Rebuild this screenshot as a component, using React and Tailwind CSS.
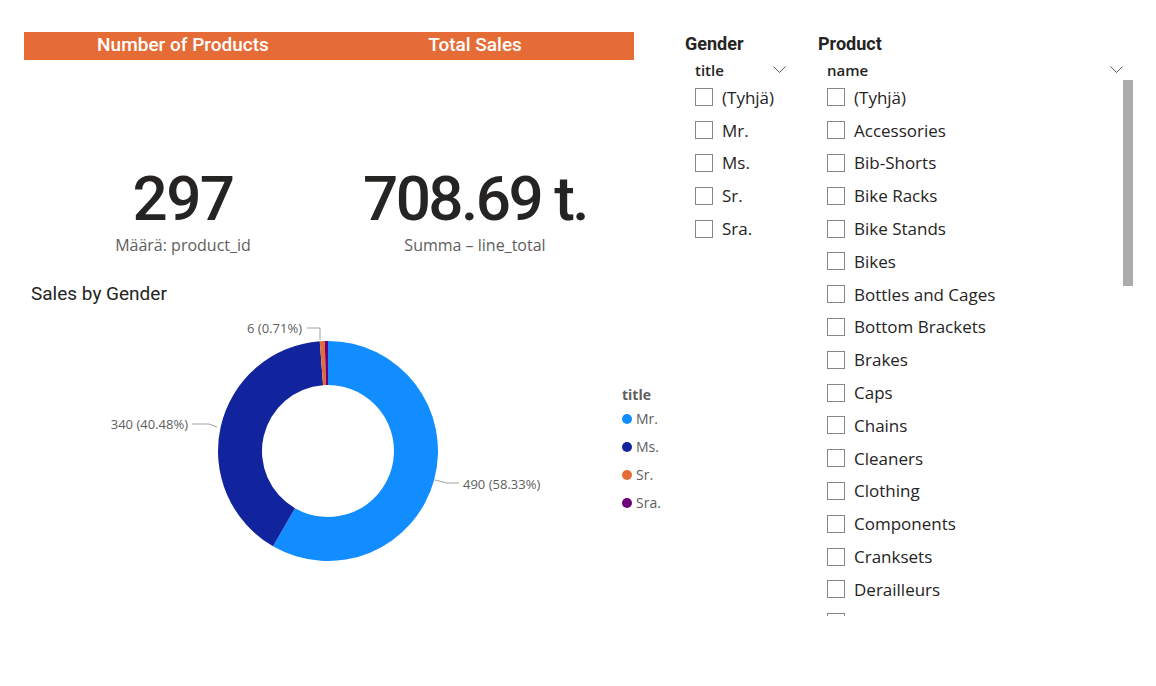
const genders = ["(Tyhjä)", "Mr.", "Ms.", "Sr.", "Sra."];

const products = [
  "(Tyhjä)",
  "Accessories",
  "Bib-Shorts",
  "Bike Racks",
  "Bike Stands",
  "Bikes",
  "Bottles and Cages",
  "Bottom Brackets",
  "Brakes",
  "Caps",
  "Chains",
  "Cleaners",
  "Clothing",
  "Components",
  "Cranksets",
  "Derailleurs",
  "Fenders",
];

const slices = [
  { name: "Mr.", value: 490, color: "#118DFF" },
  { name: "Ms.", value: 340, color: "#12239E" },
  { name: "Sr.", value: 6, color: "#E66C37" },
  { name: "Sra.", value: 4, color: "#6B007B" },
];

const CX = 304;
const CY = 145;
const R = 110;
const r = 66;

function point(angle, radius) {
  const rad = (angle * Math.PI) / 180;
  return [CX + radius * Math.sin(rad), CY - radius * Math.cos(rad)];
}

function arcPath(a0, a1) {
  const large = a1 - a0 > 180 ? 1 : 0;
  const [x0, y0] = point(a0, R);
  const [x1, y1] = point(a1, R);
  const [x2, y2] = point(a1, r);
  const [x3, y3] = point(a0, r);
  return `M${x0} ${y0} A${R} ${R} 0 ${large} 1 ${x1} ${y1} L${x2} ${y2} A${r} ${r} 0 ${large} 0 ${x3} ${y3} Z`;
}

function Chevron() {
  return (
    <svg width="13" height="8" viewBox="0 0 13 8">
      <polyline points="0.5,0.5 6.5,6.5 12.5,0.5" fill="none" stroke="#605E5C" strokeWidth="1" />
    </svg>
  );
}

function CheckRow({ label }) {
  return (
    <div className="h-[32.8px] flex items-center shrink-0">
      <div className="w-[18px] h-[18px] border border-[#8A8886] bg-white shrink-0" />
      <span className="ml-[9px] text-[17px] text-[#252423] whitespace-nowrap leading-none">{label}</span>
    </div>
  );
}

function Donut() {
  const total = slices.reduce((s, d) => s + d.value, 0);
  let start = 0;
  const paths = slices.map((d) => {
    const end = start + (d.value / total) * 360;
    const p = <path key={d.name} d={arcPath(start, end)} fill={d.color} />;
    start = end;
    return p;
  });

  return (
    <svg width="598" height="300" viewBox="0 0 598 300" className="shrink-0">
      {paths}
      <g fill="none" stroke="#A19F9D" strokeWidth="1">
        <polyline points="411,174 423,177 435,177" />
        <polyline points="168,118 185,118 193,121" />
        <polyline points="283,22 296,22 296,34" />
      </g>
      <g fill="#605E5C" fontSize="13" fontFamily="'Open Sans', sans-serif">
        <text x="439" y="178" dominantBaseline="central">490 (58.33%)</text>
        <text x="164" y="118" dominantBaseline="central" textAnchor="end">340 (40.48%)</text>
        <text x="278" y="22" dominantBaseline="central" textAnchor="end">6 (0.71%)</text>
      </g>
    </svg>
  );
}

export default function App() {
  return (
    <div className="w-[1156px] h-[686px] bg-white flex overflow-hidden font-['Open_Sans',sans-serif]">
      {/* report canvas */}
      <div className="ml-[24px] w-[610px] pt-[32px] flex flex-col shrink-0">
        <div className="h-[28px] pb-[3px] bg-[#E66C37] flex items-center text-white font-['Roboto',sans-serif] font-medium text-[19px] leading-[24px]">
          <div className="w-[318px] text-center">Number of Products</div>
          <div className="w-[266px] text-center">Total Sales</div>
        </div>

        <div className="mt-[108px] flex">
          <div className="w-[318px] flex flex-col items-center">
            <div className="font-['Roboto',sans-serif] font-medium text-[62px] tracking-[-1.5px] leading-none text-[#252423]">297</div>
            <div className="mt-[5px] text-[16px] leading-[20px] text-[#605E5C]">Määrä: product_id</div>
          </div>
          <div className="w-[266px] flex flex-col items-center">
            <div className="font-['Roboto',sans-serif] font-medium text-[62px] tracking-[-2.5px] leading-none text-[#252423] whitespace-nowrap">708.69 t.</div>
            <div className="mt-[5px] text-[16px] leading-[20px] text-[#605E5C]">Summa – line_total</div>
          </div>
        </div>

        <div className="mt-[27px] ml-[7px] font-['Roboto',sans-serif] text-[19px] leading-[24px] text-[#252423]">
          Sales by Gender
        </div>

        <div className="flex">
          <Donut />
          <div className="mt-[79px] flex flex-col">
            <div className="text-[14px] font-bold leading-[20px] text-[#605E5C]">title</div>
            {slices.map((d) => (
              <div key={d.name} className="h-[28px] flex items-center">
                <span className="w-[10px] h-[10px] rounded-full shrink-0" style={{ backgroundColor: d.color }} />
                <span className="ml-[4px] text-[14px] leading-none text-[#605E5C]">{d.name}</span>
              </div>
            ))}
          </div>
        </div>
      </div>

      {/* Gender slicer */}
      <div className="ml-[51px] w-[133px] pt-[32px] flex flex-col shrink-0">
        <div className="font-['Roboto',sans-serif] font-bold text-[18px] leading-[24px] text-[#252423]">Gender</div>
        <div className="ml-[10px] w-[91px] mt-[4px] h-[20px] flex items-center justify-between">
          <span className="text-[15px] font-semibold leading-none text-[#252423]">title</span>
          <Chevron />
        </div>
        <div className="ml-[10px] mt-[1px] flex flex-col">
          {genders.map((g) => (
            <CheckRow key={g} label={g} />
          ))}
        </div>
      </div>

      {/* Product slicer */}
      <div className="w-[320px] pt-[32px] flex flex-col shrink-0">
        <div className="font-['Roboto',sans-serif] font-bold text-[18px] leading-[24px] text-[#252423]">Product</div>
        <div className="ml-[9px] w-[296px] mt-[4px] h-[20px] flex items-center justify-between">
          <span className="text-[15px] font-semibold leading-none text-[#252423]">name</span>
          <Chevron />
        </div>
        <div className="ml-[9px] flex">
          <div className="w-[296px] h-[536px] pt-[1px] overflow-hidden flex flex-col">
            {products.map((p) => (
              <CheckRow key={p} label={p} />
            ))}
          </div>
          <div className="w-[10px] h-[536px]">
            <div className="w-[10px] h-[206px] bg-[#ABABAB]" />
          </div>
        </div>
      </div>
    </div>
  );
}
